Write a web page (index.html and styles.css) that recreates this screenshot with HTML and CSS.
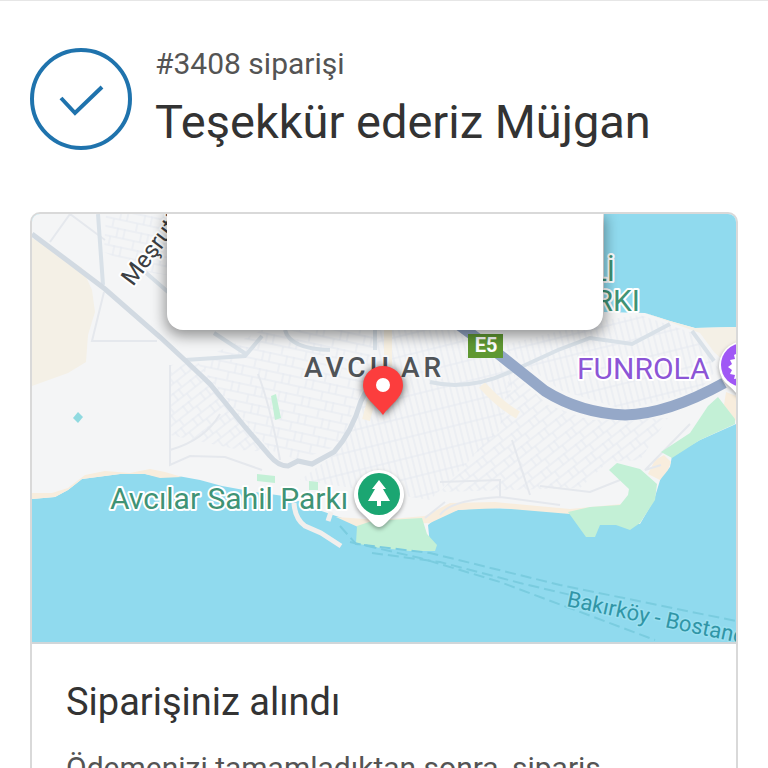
FILE: index.html
```html
<!DOCTYPE html>
<html lang="tr">
  <head>
    <meta charset="utf-8">
    <meta name="viewport" content="width=device-width, initial-scale=1">
    <title>Teşekkür ederiz Müjgan</title>
    <link rel="stylesheet" href="styles.css">
  </head>
  <body>
  <main class="main">

    <header class="os-header">
      <svg class="os-header__icon" viewBox="0 0 102 102" aria-hidden="true">
        <circle cx="51" cy="51" r="49"/>
        <path d="M31 50l14 15 27-26"/>
      </svg>
      <div class="os-header__heading">
        <p class="os-order-number">#3408 siparişi</p>
        <h1 class="os-header__title">Teşekkür ederiz Müjgan</h1>
      </div>
    </header>

    <section class="content-box">
      <div class="map">
        <svg class="map__canvas" viewBox="32 214 704 428" preserveAspectRatio="xMidYMid slice" role="img" aria-label="Avcılar">
          <defs>
            <pattern id="streets-a" width="24" height="18" patternUnits="userSpaceOnUse" patternTransform="rotate(12)">
              <path class="street" d="M0 1H24M0 10H24M2 0V10M13 10V18M19 0V10"/>
            </pattern>
            <pattern id="streets-b" width="22" height="16" patternUnits="userSpaceOnUse" patternTransform="rotate(-38)">
              <path class="street" d="M0 1H22M0 9H22M4 0V9M15 9V16M11 0V9"/>
            </pattern>
            <pattern id="streets-c" width="18" height="20" patternUnits="userSpaceOnUse" patternTransform="rotate(-14)">
              <path class="street" d="M1 0V20M7 0V20M13 0V20M0 3H18"/>
            </pattern>
          </defs>

          <!-- sea and land -->
          <rect class="sea" x="32" y="214" width="704" height="428"/>
          <path class="land" d="M32 214H604V312L645 313 670 321 695 328 736 327V424L700 440 672 456 670 467 661 477 654 500 640 524 590 520 568 513 520 509 480 508 458 510 440 515 428 525 430 545 358 540 357 523 336 516 310 507 291 497 255 492 222 486 200 480 178 476 160 477 145 474 120 474 82 479 68 490 55 497 32 499z"/>
          <path class="sand" d="M32 238L62 255 82 268 92 290 95 312 88 335 86 362 68 373 32 386z"/>
          <path class="sand" d="M645 313L670 321 695 328 736 327V372L714 352 700 333z"/>
          <path class="beach" d="M32 499V493L52 493 68 488 85 475 105 471 130 473 150 469 165 472 182 477 160 478 145 474 120 474 82 479 68 490 55 497z"/>
          <path class="beach" d="M336 517L380 520 425 516 450 503 495 502 570 509 622 504 620 507 570 514 500 508 458 510 430 523 358 527z"/>
          <path class="beach" d="M655 460L664 455 671 462 668 470 660 480 648 474z"/>
          <path class="beach" d="M726 392L736 396V421L724 405z"/>

          <!-- small streets -->
          <path fill="url(#streets-b)" d="M170 365L198 362 270 452 240 450 170 435z"/>
          <path fill="url(#streets-a)" d="M196 362L262 330H380L362 390 340 445 298 460 270 450z"/>
          <path fill="url(#streets-c)" d="M380 330H455L515 375 500 430 430 500 300 480 340 450 365 395z"/>
          <path fill="url(#streets-b)" d="M510 370L548 405 590 420 668 418 640 460 608 462 580 488 440 492 500 425z"/>
          <path fill="url(#streets-c)" d="M500 346L604 320 640 315 690 332 718 368 700 390 625 410 560 390z"/>
          <path fill="url(#streets-a)" d="M106 214H168V275L145 272 104 252z"/>
          <path class="lane" d="M50 242L70 214M70 214L105 240M104 292L92 341H157M170 365V465L190 456 225 457 262 470M170 450Q205 440 220 414M258 374Q270 405 280 460M440 515Q450 500 500 497L560 505M500 497V480L440 482M425 518L445 502M620 480L590 492 540 486M661 465L645 470 690 424M512 440L530 495"/>
          <path class="lane lane--yellow" d="M388 330V366M482 385Q500 405 518 415M372 398L366 420"/>

          <!-- parks -->
          <path class="park" d="M357 526L372 521 422 518 427 534 437 545 435 551 410 551 372 547 356 543z"/>
          <path class="park" d="M708 406L718 397 735 419 735 424 700 440 672 458 661 452 690 433z"/>
          <path class="park" d="M609 470L617 463 640 469 657 484 655 500 640 523 630 530 616 525 600 525 595 537 586 537 568 512 590 507 620 505 628 495 629 489z"/>
          <path class="park" d="M271 396L276 394 281 418 275 420zM257 474L275 476V483L257 481zM309 481L318 482V490H309z"/>
          <path class="pond" d="M78 412l5 5-5 6-5-5z"/>

          <!-- main roads -->
          <path class="road" d="M98 214L103 285M145 272L168 292M185 360L245 356 262 336M214 333L246 354M285 330Q290 349 330 350M430 382Q468 391 510 372L558 350 590 338 632 344 670 324M692 331L714 361M375 330V350"/>
          <path class="road road--wide" d="M32 234L68 261 105 289 160 337 188 363 210 384 245 427 270 456Q278 466 288 466L298 461 312 464 334 452Q352 432 361 401L372 380"/>
          <path class="highway" d="M455 322L496 352 545 391Q580 413 625 415 668 414 724 383"/>

          <!-- pier and ferry lines -->
          <path class="pier" d="M294 503Q295 519 305 526L321 533 341 546M331 512L328 521"/>
          <path class="ferry" d="M340 526L356 544 430 553 560 585 736 621"/>
          <path class="ferry" d="M350 542L420 558 500 582 655 640"/>
          <path class="ferry" d="M372 553L440 562 520 583 575 596"/>

          <!-- labels -->
          <text class="label label--street" transform="translate(133 287) rotate(-53)">Meşrutiyet</text>
          <text class="label label--district" x="304" y="377">AVCILAR</text>
          <text class="label label--park" x="615" y="281" text-anchor="end">Lİ</text>
          <text class="label label--park" x="640" y="311" text-anchor="end">PARKI</text>
          <text class="label label--park" x="110" y="509">Avcılar Sahil Parkı</text>
          <text class="label label--place" x="577" y="379">FUNROLA</text>
          <text class="label label--ferry" transform="translate(566 606) rotate(12)">Bakırköy - Bostancı</text>

          <rect class="shield" x="468" y="334" width="35" height="24"/>
          <text class="shield-text" x="486" y="352" text-anchor="middle">E5</text>

          <!-- place markers -->
          <g class="marker">
            <path class="marker__pin" d="M379 527C374 527 371 521 364 515A25 25 0 1 1 394 515C387 521 384 527 379 527z"/>
            <circle class="marker__park" cx="379" cy="494" r="21"/>
            <path class="marker__glyph" d="M379 480L386 489H383L390 501H381V506H377V501H368L375 489H372z"/>
          </g>
          <g class="marker">
            <path class="marker__pin" d="M744 398C739 398 736 392 729 386A25 25 0 1 1 759 386C752 392 749 398 744 398z"/>
            <circle class="marker__place" cx="743" cy="365" r="22"/>
            <path class="marker__glyph" d="M738 353L734 355 735 359 730 360 732 364 728 367 732 370 730 374 735 375 734 379 740 378V353z"/>
          </g>
          <g class="marker marker--order">
            <path class="marker__order" d="M383 415C376 405 363 398 363 385A20 19 0 0 1 403 385C403 398 390 405 383 415z"/>
            <circle class="marker__glyph" cx="383" cy="385" r="7"/>
          </g>
        </svg>
        <div class="map__info"></div>
      </div>

      <div class="content-box__row">
        <h2 class="content-box__title">Siparişiniz alındı</h2>
        <p class="content-box__text">Ödemenizi tamamladıktan sonra, sipariş</p>
      </div>
    </section>

  </main>
  </body>
</html>
```
FILE: styles.css
```css
* { box-sizing: border-box; }

body {
  margin: 0;
  height: 100vh;
  overflow: hidden;
  background: #fff;
  color: #333;
  font-family: Roboto, "Liberation Sans", sans-serif;
}

h1, h2, p { margin: 0; font-weight: 400; }

.main {
  border-top: 1px solid #e6e6e6;
  padding: 40px 30px;
}

/* order header */
.os-header {
  display: flex;
  align-items: flex-start;
  gap: 23px;
  padding-top: 7px;
  margin-bottom: 62px;
}
.os-header__icon {
  flex: none;
  width: 102px;
  height: 102px;
  fill: none;
  stroke: #1f73ad;
  stroke-width: 4;
}
.os-order-number {
  font-size: 30px;
  line-height: 32px;
  color: #545454;
}
.os-header__title {
  margin-top: 14px;
  font-size: 47px;
  line-height: 56px;
}

/* box */
.content-box {
  border: 2px solid #d9d9d9;
  border-radius: 10px;
  overflow: hidden;
}
.content-box__row { padding: 34px; }
.content-box__title {
  font-size: 38px;
  line-height: 48px;
}
.content-box__text {
  margin-top: 20px;
  font-size: 30px;
  line-height: 44px;
  color: #545454;
}

/* map */
.map {
  position: relative;
  overflow: hidden;
  border-bottom: 2px solid #d0d6d9;
}
.map__canvas { display: block; width: 100%; }
.map__info {
  position: absolute;
  top: 0;
  left: 19%;
  width: 62%;
  height: 27%;
  margin-left: 1px;
  background: #fff;
  border-radius: 0 0 16px 16px;
  box-shadow: 0 4px 14px 2px rgba(0, 0, 0, .4);
}

.sea { fill: #90daee; }
.land { fill: #f4f5f6; }
.sand { fill: #f4f0e6; }
.beach { fill: #f8eddd; }
.park { fill: #c3f0d6; }
.pond { fill: #90dae0; }

.street { fill: none; stroke: #e5e9f0; stroke-width: 1; }
.lane { fill: none; stroke: #e5e8ed; stroke-width: 2; }
.lane--yellow { stroke: #f7f0e2; stroke-width: 8; }
.road { fill: none; stroke: #d9e1e8; stroke-width: 4; }
.road--wide { stroke: #d2dae2; stroke-width: 5; }
.highway { fill: none; stroke: #95a8c8; stroke-width: 11; }
.pier { fill: none; stroke: #f1efed; stroke-width: 5; stroke-linejoin: round; }
.ferry { fill: none; stroke: #7accdf; stroke-width: 2; stroke-dasharray: 11 5; }

.label {
  font-size: 30px;
  stroke: #fff;
  stroke-width: 4;
  stroke-linejoin: round;
  paint-order: stroke;
}
.label--street { font-size: 24px; fill: #3c3f43; }
.label--district { font-size: 28px; font-weight: 500; letter-spacing: 4px; fill: #505458; stroke: #f6f7f9; }
.label--park { fill: #3f9375; }
.label--place { fill: #8c55d6; }
.label--ferry { font-size: 22px; fill: #3095a6; stroke: #9be0f1; stroke-width: 3; }

.shield { fill: #5f9832; }
.shield-text { font-size: 20px; font-weight: 700; fill: #fff; }

.marker { filter: drop-shadow(0 2px 2px rgba(0, 0, 0, .35)); }
.marker--order { filter: drop-shadow(0 1px 4px rgba(0, 0, 0, .7)); }
.marker__pin, .marker__glyph { fill: #fff; }
.marker__park { fill: #1ba672; }
.marker__place { fill: #a058f5; }
.marker__order { fill: #fc3d3d; }
```
